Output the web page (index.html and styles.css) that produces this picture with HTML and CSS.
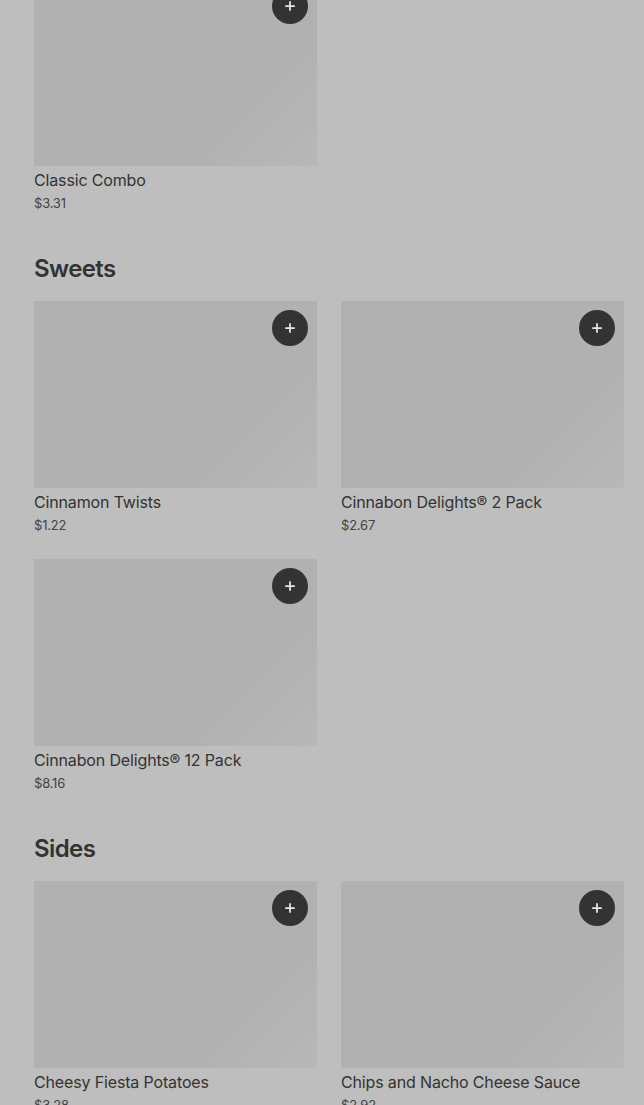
FILE: index.html
```html
<!DOCTYPE html>
<html>
<head>
<meta charset="utf-8">
<link rel="stylesheet" href="styles.css">
</head>
<body>
<main class="menu">
  <section class="section first">
    <div class="grid">
      <div class="card">
        <div class="thumb"><button class="add"><svg viewBox="0 0 16 16" width="14" height="14"><path d="M8 2.5v11M2.5 8h11" stroke="#e6e6e6" stroke-width="2"/></svg></button></div>
        <div class="name">Classic Combo</div>
        <div class="price">$3.31</div>
      </div>
    </div>
  </section>
  <section class="section">
    <h2 class="heading">Sweets</h2>
    <div class="grid">
      <div class="card">
        <div class="thumb"><button class="add"><svg viewBox="0 0 16 16" width="14" height="14"><path d="M8 2.5v11M2.5 8h11" stroke="#e6e6e6" stroke-width="2"/></svg></button></div>
        <div class="name">Cinnamon Twists</div>
        <div class="price">$1.22</div>
      </div>
      <div class="card">
        <div class="thumb"><button class="add"><svg viewBox="0 0 16 16" width="14" height="14"><path d="M8 2.5v11M2.5 8h11" stroke="#e6e6e6" stroke-width="2"/></svg></button></div>
        <div class="name">Cinnabon Delights® 2 Pack</div>
        <div class="price">$2.67</div>
      </div>
      <div class="card">
        <div class="thumb"><button class="add"><svg viewBox="0 0 16 16" width="14" height="14"><path d="M8 2.5v11M2.5 8h11" stroke="#e6e6e6" stroke-width="2"/></svg></button></div>
        <div class="name">Cinnabon Delights® 12 Pack</div>
        <div class="price">$8.16</div>
      </div>
    </div>
  </section>
  <section class="section">
    <h2 class="heading">Sides</h2>
    <div class="grid">
      <div class="card">
        <div class="thumb"><button class="add"><svg viewBox="0 0 16 16" width="14" height="14"><path d="M8 2.5v11M2.5 8h11" stroke="#e6e6e6" stroke-width="2"/></svg></button></div>
        <div class="name">Cheesy Fiesta Potatoes</div>
        <div class="price">$3.28</div>
      </div>
      <div class="card">
        <div class="thumb"><button class="add"><svg viewBox="0 0 16 16" width="14" height="14"><path d="M8 2.5v11M2.5 8h11" stroke="#e6e6e6" stroke-width="2"/></svg></button></div>
        <div class="name">Chips and Nacho Cheese Sauce</div>
        <div class="price">$2.92</div>
      </div>
    </div>
  </section>
</main>
</body>
</html>
```
FILE: styles.css
```css
html, body {
  margin: 0;
  padding: 0;
  background: #bebebe;
  overflow: hidden;
}
body {
  font-family: Inter, "Noto Sans", sans-serif;
  color: #323232;
}
.menu {
  margin-top: -21px;
  padding: 0 20px 0 34px;
  display: flex;
  flex-direction: column;
  gap: 40px;
}
.heading {
  margin: 0 0 16px;
  font-size: 24px;
  line-height: 32px;
  font-weight: 600;
  letter-spacing: -0.6px;
  color: #333;
}
.grid {
  display: grid;
  grid-template-columns: 283px 283px;
  column-gap: 24px;
  row-gap: 24px;
}
.card {
  display: flex;
  flex-direction: column;
}
.thumb {
  position: relative;
  height: 187px;
  background: linear-gradient(135deg, #b1b1b1 0%, #b1b1b1 72%, #b8b8b8 100%);
}
.add {
  position: absolute;
  top: 9px;
  right: 9px;
  width: 36px;
  height: 36px;
  border-radius: 50%;
  border: none;
  padding: 0;
  background: #333333;
  display: flex;
  align-items: center;
  justify-content: center;
}
.name {
  margin-top: 4px;
  font-size: 16px;
  line-height: 20px;
  font-weight: 400;
  letter-spacing: -0.15px;
  color: #333;
}
.price {
  margin-top: 3px;
  font-size: 13px;
  line-height: 20px;
  letter-spacing: -0.2px;
  color: #444;
}
```
